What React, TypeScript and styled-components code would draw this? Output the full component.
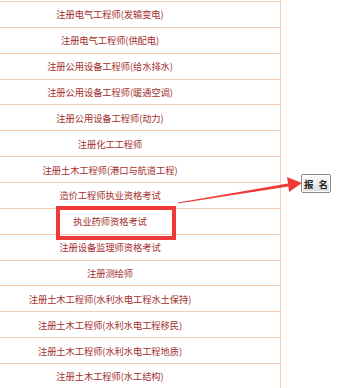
import React from "react";
import styled, { createGlobalStyle } from "styled-components";

const Global = createGlobalStyle`
  html, body { margin: 0; padding: 0; background: #fff; overflow: hidden; }
  body { font-family: "Noto Sans CJK SC", "Noto Sans", sans-serif; }
`;

const Page = styled.div`
  position: relative;
  width: 340px;
  height: 388px;
  overflow: hidden;
  display: flex;
  align-items: flex-start;
`;

const TableWrap = styled.div`
  width: 281px;
  flex: none;
  overflow: hidden;
  padding-top: 1px;
  border-right: 1.5px solid #f7cdb2;
  height: 388px;
  box-sizing: border-box;
`;

const Table = styled.div`
  margin-left: -60px;
  width: 340px;
  display: flex;
  flex-direction: column;
`;

const Row = styled.div`
  box-sizing: border-box;
  height: 25.86px;
  flex: none;
  border-top: 1.5px solid #f7cdb2;
  display: flex;
  align-items: center;
  justify-content: center;
  font-size: 9.3px;
  color: #a3302e;
  white-space: nowrap;
  letter-spacing: -0.1px;
`;

const Side = styled.div`
  flex: 1;
  padding-top: 174px;
  padding-left: 20px;
`;

const Button = styled.div`
  box-sizing: border-box;
  width: 30px;
  height: 19px;
  border: 1px solid #8a8a8a;
  border-radius: 2px;
  background: linear-gradient(#fbfbfb, #dcdcdc);
  display: flex;
  align-items: center;
  justify-content: center;
  gap: 5px;
  font-size: 9.5px;
  font-weight: bold;
  color: #222;
  box-shadow: inset 0 0 0 1px #fff;
`;

const Highlight = styled.div`
  position: absolute;
  left: 56px;
  top: 206px;
  width: 120px;
  height: 34px;
  box-sizing: border-box;
  border: 4.5px solid #f03a3a;
`;

const Arrow = styled.svg`
  position: absolute;
  left: 0;
  top: 0;
  pointer-events: none;
`;

const items = [
  "注册电气工程师(发输变电)",
  "注册电气工程师(供配电)",
  "注册公用设备工程师(给水排水)",
  "注册公用设备工程师(暖通空调)",
  "注册公用设备工程师(动力)",
  "注册化工工程师",
  "注册土木工程师(港口与航道工程)",
  "造价工程师执业资格考试",
  "执业药师资格考试",
  "注册设备监理师资格考试",
  "注册测绘师",
  "注册土木工程师(水利水电工程水土保持)",
  "注册土木工程师(水利水电工程移民)",
  "注册土木工程师(水利水电工程地质)",
  "注册土木工程师(水工结构)",
];

export default function App() {
  return (
    <>
      <Global />
      <Page>
        <TableWrap>
          <Table>
            {items.map((t) => (
              <Row key={t}>{t}</Row>
            ))}
          </Table>
        </TableWrap>
        <Side>
          <Button>
            <span>报</span>
            <span>名</span>
          </Button>
        </Side>
        <Highlight />
        <Arrow width="340" height="388" viewBox="0 0 340 388">
          <polygon points="178,202.5 288,183.5 287,177 302,183 289,192 288.5,186.5 178,203.5" fill="#f03a3a" />
        </Arrow>
      </Page>
    </>
  );
}
